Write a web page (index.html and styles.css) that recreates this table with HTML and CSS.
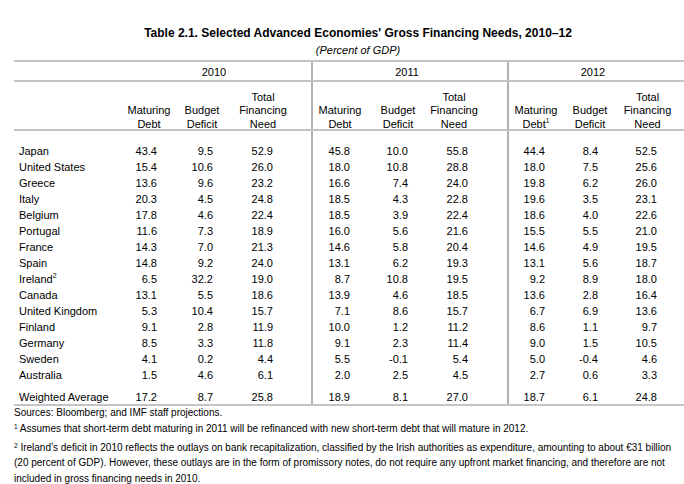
FILE: index.html
```html
<!DOCTYPE html>
<html>
<head>
<meta charset="utf-8">
<link rel="stylesheet" href="styles.css">
</head>
<body>
<div class="page">
  <h1 class="title">Table 2.1. Selected Advanced Economies' Gross Financing Needs, 2010–12</h1>
  <p class="subtitle">(Percent of GDP)</p>
  <div class="table">
    <div class="row years">
      <div></div>
      <div class="y y10">2010</div>
      <div class="y y11">2011</div>
      <div class="y y12">2012</div>
    </div>
    <div class="row head">
      <div></div>
      <div><span>Maturing<br>Debt</span></div>
      <div><span>Budget<br>Deficit</span></div>
      <div><span>Total<br>Financing<br>Need</span></div>
      <div><span>Maturing<br>Debt</span></div>
      <div><span>Budget<br>Deficit</span></div>
      <div><span>Total<br>Financing<br>Need</span></div>
      <div><span>Maturing<br>Debt<sup>1</sup></span></div>
      <div><span>Budget<br>Deficit</span></div>
      <div><span>Total<br>Financing<br>Need</span></div>
    </div>
    <div class="row data first"><div>Japan</div><div>43.4</div><div>9.5</div><div>52.9</div><div>45.8</div><div>10.0</div><div>55.8</div><div>44.4</div><div>8.4</div><div>52.5</div></div>
    <div class="row data"><div>United States</div><div>15.4</div><div>10.6</div><div>26.0</div><div>18.0</div><div>10.8</div><div>28.8</div><div>18.0</div><div>7.5</div><div>25.6</div></div>
    <div class="row data"><div>Greece</div><div>13.6</div><div>9.6</div><div>23.2</div><div>16.6</div><div>7.4</div><div>24.0</div><div>19.8</div><div>6.2</div><div>26.0</div></div>
    <div class="row data"><div>Italy</div><div>20.3</div><div>4.5</div><div>24.8</div><div>18.5</div><div>4.3</div><div>22.8</div><div>19.6</div><div>3.5</div><div>23.1</div></div>
    <div class="row data"><div>Belgium</div><div>17.8</div><div>4.6</div><div>22.4</div><div>18.5</div><div>3.9</div><div>22.4</div><div>18.6</div><div>4.0</div><div>22.6</div></div>
    <div class="row data"><div>Portugal</div><div>11.6</div><div>7.3</div><div>18.9</div><div>16.0</div><div>5.6</div><div>21.6</div><div>15.5</div><div>5.5</div><div>21.0</div></div>
    <div class="row data"><div>France</div><div>14.3</div><div>7.0</div><div>21.3</div><div>14.6</div><div>5.8</div><div>20.4</div><div>14.6</div><div>4.9</div><div>19.5</div></div>
    <div class="row data"><div>Spain</div><div>14.8</div><div>9.2</div><div>24.0</div><div>13.1</div><div>6.2</div><div>19.3</div><div>13.1</div><div>5.6</div><div>18.7</div></div>
    <div class="row data"><div>Ireland<sup>2</sup></div><div>6.5</div><div>32.2</div><div>19.0</div><div>8.7</div><div>10.8</div><div>19.5</div><div>9.2</div><div>8.9</div><div>18.0</div></div>
    <div class="row data"><div>Canada</div><div>13.1</div><div>5.5</div><div>18.6</div><div>13.9</div><div>4.6</div><div>18.5</div><div>13.6</div><div>2.8</div><div>16.4</div></div>
    <div class="row data"><div>United Kingdom</div><div>5.3</div><div>10.4</div><div>15.7</div><div>7.1</div><div>8.6</div><div>15.7</div><div>6.7</div><div>6.9</div><div>13.6</div></div>
    <div class="row data"><div>Finland</div><div>9.1</div><div>2.8</div><div>11.9</div><div>10.0</div><div>1.2</div><div>11.2</div><div>8.6</div><div>1.1</div><div>9.7</div></div>
    <div class="row data"><div>Germany</div><div>8.5</div><div>3.3</div><div>11.8</div><div>9.1</div><div>2.3</div><div>11.4</div><div>9.0</div><div>1.5</div><div>10.5</div></div>
    <div class="row data"><div>Sweden</div><div>4.1</div><div>0.2</div><div>4.4</div><div>5.5</div><div>-0.1</div><div>5.4</div><div>5.0</div><div>-0.4</div><div>4.6</div></div>
    <div class="row data"><div>Australia</div><div>1.5</div><div>4.6</div><div>6.1</div><div>2.0</div><div>2.5</div><div>4.5</div><div>2.7</div><div>0.6</div><div>3.3</div></div>
    <div class="row data avg"><div>Weighted Average</div><div>17.2</div><div>8.7</div><div>25.8</div><div>18.9</div><div>8.1</div><div>27.0</div><div>18.7</div><div>6.1</div><div>24.8</div></div>
  </div>
  <div class="notes">
    <p class="src">Sources: Bloomberg; and IMF staff projections.</p>
    <p class="fn fn1"><sup>1</sup> Assumes that short-term debt maturing in 2011 will be refinanced with new short-term debt that will mature in 2012.</p>
    <p class="fn fn2"><sup>2</sup> Ireland’s deficit in 2010 reflects the outlays on bank recapitalization, classified by the Irish authorities as expenditure, amounting to about €31 billion (20 percent of GDP). However, these outlays are in the form of promissory notes, do not require any upfront market financing, and therefore are not included in gross financing needs in 2010.</p>
  </div>
</div>
</body>
</html>
```

FILE: styles.css
```css
* { box-sizing: border-box; }
html, body { margin: 0; padding: 0; background: #fff; overflow: hidden; }
body {
  font-family: "Liberation Sans", Arial, Helvetica, sans-serif;
  color: #000;
  width: 684px;
  height: 484px;
}
.page { width: 688px; margin-left: 14px; padding-top: 26px; }
.title {
  margin: 0;
  font-size: 12px;
  font-weight: bold;
  line-height: 14px;
  text-align: center;
}
.subtitle {
  margin: 3px 0 0;
  font-size: 11px;
  font-style: italic;
  line-height: 14px;
  text-align: center;
}
.table {
  margin-top: 3px;
  border-top: 2px solid #c4c4c4;
  border-bottom: 2px solid #c4c4c4;
  font-size: 11px;
}
.row {
  display: grid;
  grid-template-columns: 110px 50px 56px 81px 56px 62px 78px 56px 54px 85px;
}
sup { font-size: 7px; line-height: 0; vertical-align: 5px; }

/* year row */
.years { border-bottom: 2px solid #c4c4c4; line-height: 16px; }
.years > div { padding-top: 2px; height: 18px; text-align: center; }
.y { grid-column: span 3; }
.y10 { padding-right: 7px; }
.y11 { border-left: 2px solid #b2b2b2; padding-right: 6px; }
.y12 { border-left: 2px solid #b2b2b2; padding-right: 25px; }

/* column header row */
.head { border-bottom: 2px solid #c4c4c4; line-height: 13.5px; }
.head > div {
  height: 47px;
  text-align: center;
  display: flex;
  flex-direction: column;
  justify-content: flex-end;
}
.head span { display: block; margin-bottom: -2px; }
.head > :nth-child(4) { padding-right: 15px; }
.head > :nth-child(7) { padding-right: 28px; }
.head > :nth-child(10) { padding-right: 24px; }
.head sup { font-size: 6.5px; vertical-align: 5px; }

.row > :nth-child(5), .row > :nth-child(8) { border-left: 2px solid #b2b2b2; }

/* data rows */
.data { line-height: 16px; }
.data > div { text-align: right; }
.data > :nth-child(1) { text-align: left; padding-left: 5px; }
.data > :nth-child(2) { padding-right: 17px; }
.data > :nth-child(3) { padding-right: 17px; }
.data > :nth-child(4) { padding-right: 38px; }
.data > :nth-child(5) { padding-right: 17px; }
.data > :nth-child(6) { padding-right: 21px; }
.data > :nth-child(7) { padding-right: 39px; }
.data > :nth-child(8) { padding-right: 18px; }
.data > :nth-child(9) { padding-right: 19px; }
.data > :nth-child(10) { padding-right: 45px; }
.first > div { padding-top: 12px; }
.avg { line-height: 14px; }
.avg > div { padding-top: 7px; }

/* notes */
.notes { width: 670px; font-size: 10px; }
.notes p { margin: 0; }
.src { line-height: 14px; }
.fn { line-height: 15.5px; }
.fn1 { margin-top: 1px !important; }
.fn2 { margin-top: 3px !important; }
.fn sup { font-size: 6.5px; vertical-align: 3px; }
```
